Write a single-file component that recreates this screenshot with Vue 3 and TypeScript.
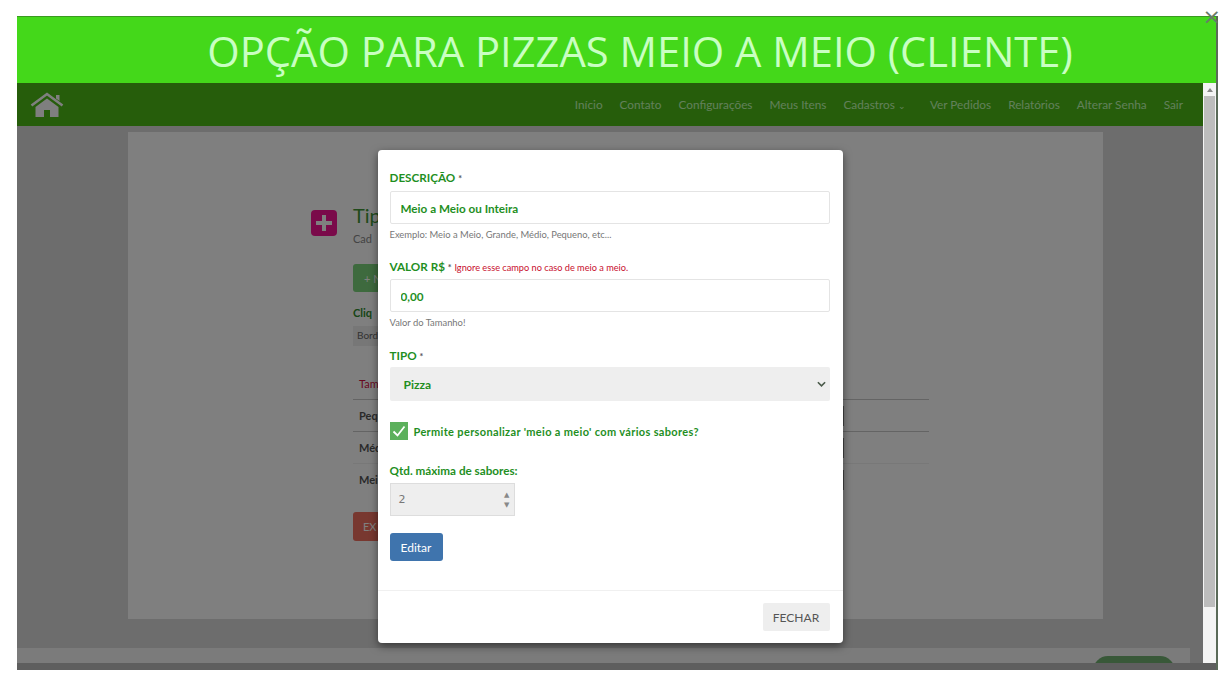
<script setup lang="ts">
const navItems: string[] = ['Início', 'Contato', 'Configurações', 'Meus Itens']
const navItemsEnd: string[] = ['Ver Pedidos', 'Relatórios', 'Alterar Senha', 'Sair']
const rows: string[] = ['Peq', 'Méd', 'Mei']
</script>

<template>
  <div class="window">
    <span class="close">×</span>
    <header class="title">OPÇÃO PARA PIZZAS MEIO A MEIO (CLIENTE)</header>
    <div class="viewport">
      <div class="main">
        <nav class="nav">
          <svg class="home" viewBox="0 0 34 26" width="34" height="26" aria-hidden="true">
            <path d="M1.500 13.500 17 2l15.500 11.500" fill="none" stroke="currentColor" stroke-width="2.600" />
            <path d="M26 3h3.500v6L26 6.500z" fill="currentColor" />
            <path d="M5.500 15 17 6.500 28.500 15v10H20v-7h-6v7H5.500z" fill="currentColor" />
          </svg>
          <ul class="links">
            <li v-for="item in navItems" :key="item">{{ item }}</li>
            <li class="drop">Cadastros <span class="caret">⌄</span></li>
            <li v-for="item in navItemsEnd" :key="item">{{ item }}</li>
          </ul>
        </nav>
        <section class="page">
          <div class="card">
            <div class="plus"><span></span></div>
            <div class="content">
              <h1>Tip</h1>
              <p class="sub">Cad</p>
              <button class="new">+ N</button>
              <p class="hint">Cliq</p>
              <span class="chip">Bord</span>
              <div class="row head">Tam</div>
              <div v-for="row in rows" :key="row" class="row">
                {{ row }}<i class="row-action"></i>
              </div>
              <button class="danger">EX</button>
            </div>
          </div>
        </section>
        <div class="strip"><span class="pill"></span></div>

        <div class="backdrop">
          <div class="modal">
            <div class="modal-body">
              <label class="lbl">DESCRIÇÃO <em>*</em></label>
              <input class="field" value="Meio a Meio ou Inteira" />
              <small class="help">Exemplo: Meio a Meio, Grande, Médio, Pequeno, etc...</small>

              <label class="lbl second">VALOR R$ <em>*</em> <b>Ignore esse campo no caso de meio a meio.</b></label>
              <input class="field tight" value="0,00" />
              <small class="help">Valor do Tamanho!</small>

              <label class="lbl third">TIPO <em>*</em></label>
              <div class="select">
                <span>Pizza</span>
                <svg viewBox="0 0 10 6" width="9" height="6" aria-hidden="true">
                  <path d="M1 1l4 4 4-4" fill="none" stroke="#4a5a4a" stroke-width="1.800" />
                </svg>
              </div>

              <div class="check-row">
                <span class="check">
                  <svg viewBox="0 0 18 18" width="18" height="18" aria-hidden="true">
                    <path d="M3.500 9.500l4 4 7-9" fill="none" stroke="#fff" stroke-width="1.800" />
                  </svg>
                </span>
                <span class="check-label">Permite personalizar 'meio a meio' com vários sabores?</span>
              </div>

              <label class="lbl qty">Qtd. máxima de sabores:</label>
              <div class="number">
                <span>2</span>
                <span class="spin"><i>▲</i><i>▼</i></span>
              </div>

              <button class="edit">Editar</button>
            </div>
            <div class="modal-foot">
              <button class="fechar">FECHAR</button>
            </div>
          </div>
        </div>
      </div>
      <aside class="scrollbar"><span class="arrow"></span><span class="thumb"></span></aside>
    </div>
    <div class="bottom"></div>
  </div>
</template>

<style>
html, body { margin: 0; background: #fff; }
</style>

<style scoped>
.window {
  position: relative;
  box-sizing: border-box;
  width: 1201px;
  margin: 16px 0 0 17px;
  font-family: Lato, "Liberation Sans", sans-serif;
  border-right: 2px solid #5a6a58;
}
.close {
  position: absolute;
  top: -10px;
  right: -5px;
  font: 22px/22px "DejaVu Sans", sans-serif;
  color: #6a7a6a;
}
.title {
  height: 67px;
  box-sizing: border-box;
  border-top: 1px solid #3a9a20;
  background: #44d81a;
  color: #c9ffc2;
  font: 500 41.700px/68px "Open Sans", sans-serif;
  text-align: center;
  padding-left: 47px;
  white-space: nowrap;
}
.viewport { display: flex; height: 580px; }
.main {
  position: relative;
  width: 1186px;
  overflow: hidden;
  background: #dadada;
  display: flex;
  flex-direction: column;
}
.nav {
  flex: none;
  height: 43px;
  background: #4cbb17;
  display: flex;
  align-items: center;
  justify-content: space-between;
  padding: 0 20px 0 13px;
  box-sizing: border-box;
}
.home { color: #fff; }
.links {
  display: flex;
  gap: 17px;
  list-style: none;
  margin: 0;
  padding: 0;
  font-size: 11.800px;
  color: #c4ffb6;
}
.drop { margin-right: 7px; }
.caret { font-size: 9px; }
.page { flex: 1; padding: 6px 100px 0 111px; }
.card {
  height: 487px;
  background: #fff;
  display: flex;
  padding: 78px 0 0 183px;
  box-sizing: border-box;
  gap: 16px;
}
.plus {
  position: relative;
  flex: none;
  width: 26px;
  height: 26px;
  border-radius: 4px;
  background: #f41494;
}
.plus span {
  position: absolute;
  inset: 5px 11px;
  background: #fff;
}
.plus::after {
  content: "";
  position: absolute;
  inset: 11px 5px;
  background: #fff;
}
.content { width: 576px; margin-top: -7px; }
h1 { margin: 0; font-size: 20px; line-height: 24px; font-weight: 400; color: #3e9434; }
.sub { margin: 5px 0 0; font-size: 11px; line-height: 14px; color: #888; }
.new {
  display: block;
  margin-top: 18px;
  height: 28px;
  width: 100px;
  border: 0;
  border-radius: 3px;
  background: #7cd47c;
  color: #fff;
  font: 11px Lato, sans-serif;
  text-align: left;
  padding-left: 11px;
}
.hint { margin: 14px 0 0; font-size: 11px; line-height: 13px; font-weight: 700; color: #2e8a2e; }
.chip {
  display: block;
  width: 60px;
  margin-top: 7px;
  padding: 3px 4px;
  box-sizing: border-box;
  height: 20px;
  background: #eee;
  font-size: 10px;
  color: #666;
}
.row {
  display: flex;
  justify-content: space-between;
  align-items: center;
  height: 32px;
  box-sizing: border-box;
  border-bottom: 1px solid #c8c8c8;
  padding-left: 6px;
  font-size: 11px;
  font-weight: 700;
  color: #555;
}
.row:nth-last-of-type(2) { border-bottom-color: #f0f0f0; }
.row:last-of-type { border-bottom-color: transparent; }
.row.head { margin-top: 22px; font-weight: 400; color: #d0103f; }
.row-action {
  width: 40px;
  height: 20px;
  margin-right: 85px;
  background: #888;
}
.danger {
  display: block;
  margin-top: 16px;
  width: 80px;
  height: 29px;
  border: 0;
  border-radius: 3px;
  background: #f07060;
  color: #fff;
  font: 11px Lato, sans-serif;
  text-align: left;
  padding-left: 10px;
}
.strip {
  position: absolute;
  left: 0;
  bottom: 0;
  width: 1173px;
  height: 15px;
  background: #f6f6f6;
  overflow: hidden;
}
.pill {
  position: absolute;
  top: 8px;
  right: 15px;
  width: 82px;
  height: 30px;
  border-radius: 15px;
  background: #70b070;
}
.backdrop {
  position: absolute;
  inset: 0;
  background: rgba(0, 0, 0, 0.5);
  display: flex;
  justify-content: center;
  align-items: flex-start;
  padding-top: 67px;
}
.modal {
  width: 465px;
  height: 493px;
  background: #fff;
  border-radius: 4px;
  box-shadow: 0 3px 9px rgba(0, 0, 0, 0.5);
  display: flex;
  flex-direction: column;
}
.modal-body {
  flex: none;
  height: 440px;
  padding: 20px 13px 0 12px;
  box-sizing: border-box;
  display: flex;
  flex-direction: column;
  align-items: flex-start;
}
.lbl {
  font-size: 11.700px;
  line-height: 14px;
  font-weight: 700;
  color: #1f8f1f;
}
.lbl em { font-style: normal; color: #555; font-size: 9px; }
.lbl b { font-size: 9.200px; font-weight: 400; color: #c8102e; }
.second { margin-top: 19px; }
.third { margin-top: 20px; }
.field {
  display: block;
  width: 440px;
  height: 33px;
  margin-top: 5px;
  box-sizing: border-box;
  border: 1px solid #e4e4e4;
  border-radius: 2px;
  padding: 0 10px;
  outline: 0;
  font: 700 11.700px Lato, sans-serif;
  color: #1f8f1f;
}
.field.tight { margin-top: 4px; }
.help { margin-top: 5px; font-size: 9.400px; line-height: 11px; color: #777; }
.select {
  width: 440px;
  height: 34px;
  margin-top: 3px;
  box-sizing: border-box;
  display: flex;
  align-items: center;
  justify-content: space-between;
  padding: 0 4px 0 14px;
  background: #eee;
  border-radius: 2px;
  font-size: 12px;
  font-weight: 700;
  color: #1f8f1f;
}
.check-row { display: flex; align-items: center; gap: 6px; margin-top: 21px; }
.check {
  width: 18px;
  height: 18px;
  background: #5cb05c;
  display: block;
}
.check svg { display: block; }
.check-label {
  font-size: 11px;
  font-weight: 700;
  letter-spacing: 0.34px;
  color: #1f8f1f;
}
.qty { margin-top: 23px; }
.number {
  width: 125px;
  height: 33px;
  margin-top: 6px;
  box-sizing: border-box;
  border: 1px solid #ddd;
  background: #eee;
  display: flex;
  align-items: center;
  justify-content: space-between;
  padding: 0 4px 0 8px;
  font: 11px "DejaVu Sans", sans-serif;
  color: #777;
}
.spin { display: flex; flex-direction: column; }
.spin i { font: normal 7px/10px "DejaVu Sans", sans-serif; color: #888; }
.edit {
  margin-top: 17px;
  width: 53px;
  height: 28px;
  border: 0;
  border-radius: 3px;
  background: #3f74ad;
  color: #fff;
  font: 12px Lato, sans-serif;
  padding: 0;
}
.modal-foot {
  flex: 1;
  border-top: 1px solid #f0f0f0;
  display: flex;
  justify-content: flex-end;
  align-items: flex-start;
  padding: 12px 13px 0 0;
}
.fechar {
  width: 67px;
  height: 28px;
  border: 0;
  border-radius: 2px;
  background: #eee;
  color: #555;
  font: 12px Lato, sans-serif;
  padding: 0;
}
.scrollbar {
  flex: none;
  width: 13px;
  background: #f4f4f4;
  display: flex;
  flex-direction: column;
  align-items: center;
}
.arrow {
  width: 0;
  height: 0;
  margin: 5px 0 3px;
  border: 3px solid transparent;
  border-top: 0;
  border-bottom: 4px solid #888;
}
.thumb { width: 11px; height: 511px; background: #bdbdbd; margin-top: 1px; }
.bottom { height: 7px; background: #5e5e5e; }
</style>
